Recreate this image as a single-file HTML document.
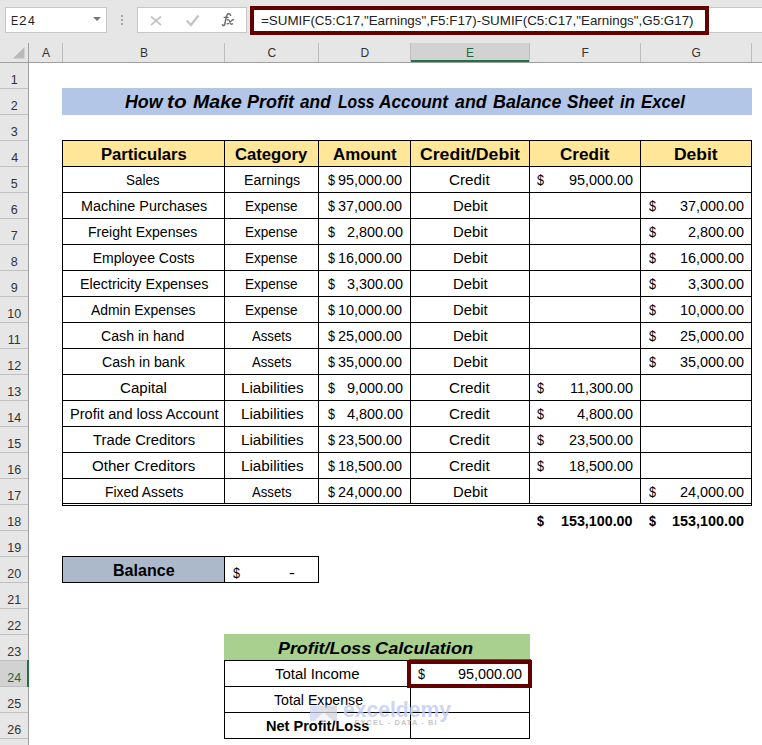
<!DOCTYPE html>
<html><head><meta charset="utf-8">
<style>
html,body{margin:0;padding:0;}
body{width:762px;height:745px;position:relative;overflow:hidden;background:#fff;font-family:"Liberation Sans",sans-serif;}
.a{position:absolute;box-sizing:border-box;}
.t{position:absolute;white-space:pre;transform-origin:0 0;line-height:normal;font-family:"Liberation Sans",sans-serif;}
.hl{position:absolute;height:1px;background:#000;}
.vl{position:absolute;width:1px;background:#000;}
.gh{position:absolute;height:1px;background:#D4D4D4;}
.gv{position:absolute;width:1px;background:#BDBDBD;}
</style></head><body>
<!-- top toolbar band -->
<div class="a" style="left:0;top:0;width:762px;height:62px;background:#E6E6E6"></div>
<div class="a" style="left:0;top:62px;width:28px;height:683px;background:#E6E6E6"></div>
<!-- name box -->
<div class="a" style="left:5px;top:7px;width:102px;height:26px;background:#fff;border:1px solid #C6C6C6"></div>
<div class="a" style="left:92.5px;top:17px;width:0;height:0;border-left:4px solid transparent;border-right:4px solid transparent;border-top:4px solid #777"></div>
<!-- dots -->
<div class="a" style="left:121px;top:15px;width:2px;height:2px;background:#a6a6a6"></div>
<div class="a" style="left:121px;top:19px;width:2px;height:2px;background:#a6a6a6"></div>
<div class="a" style="left:121px;top:23px;width:2px;height:2px;background:#a6a6a6"></div>
<!-- fx box -->
<div class="a" style="left:137px;top:7px;width:110px;height:26px;background:#fff;border:1px solid #C6C6C6"></div>
<svg class="a" style="left:0;top:0" width="762" height="62">
 <path d="M151 16.5 L161 25 M161 16.5 L151 25" stroke="#C4C4C4" stroke-width="1.7" fill="none"/>
 <path d="M186.5 20.5 L191 25 L198.5 15.5" stroke="#C4C4C4" stroke-width="2.2" fill="none"/>
</svg>
<svg class="a" style="left:215px;top:8px" width="25" height="24">
 <path d="M15.6 7.3 C15.2 5.6 13.2 5.0 12.2 6.6 C11.6 7.6 11.3 9 11 10.5 L9.8 16.2 C9.4 17.8 8.4 17.9 7.4 16.9" stroke="#6A6A6A" stroke-width="1.5" fill="none" stroke-linecap="round"/>
 <path d="M8.6 9.4 L13.6 9.4" stroke="#6A6A6A" stroke-width="1.3" fill="none"/>
 <path d="M12.6 11.9 C13.6 11.4 14.2 12 14.6 13.2 L15.6 15.6 C16 16.4 16.8 16.4 17.6 15.8 M18.4 11.8 C17.8 11.6 17.2 12 16.4 12.9 L13.8 15.4 C13.4 15.9 12.8 16 12.2 15.6" stroke="#6A6A6A" stroke-width="1.3" fill="none" stroke-linecap="round"/>
</svg>
<!-- formula bar -->
<div class="a" style="left:250px;top:7px;width:512px;height:26px;background:#fff;border-top:1px solid #C6C6C6;border-bottom:1px solid #C6C6C6"></div>
<div class="a" style="left:250px;top:6px;width:459px;height:29px;border:4px solid #640000"></div>
<!-- column header -->
<div class="a" style="left:410px;top:43px;width:119px;height:19px;background:#D2D2D2"></div>
<div class="a" style="left:410px;top:60px;width:120px;height:2px;background:#217346"></div>
<div class="a" style="left:0;top:62px;width:762px;height:1px;background:#A0A0A0"></div>
<div class="a" style="left:28px;top:43px;width:1px;height:702px;background:#A0A0A0"></div>
<svg class="a" style="left:0;top:0" width="30" height="62"><path d="M13 58.5 L24.5 47 L24.5 58.5 Z" fill="#B9B9B9"/></svg>
<div class="a" style="left:62px;top:43px;width:1px;height:19px;background:#BDBDBD"></div><div class="a" style="left:224px;top:43px;width:1px;height:19px;background:#BDBDBD"></div><div class="a" style="left:318px;top:43px;width:1px;height:19px;background:#BDBDBD"></div><div class="a" style="left:410px;top:43px;width:1px;height:19px;background:#BDBDBD"></div><div class="a" style="left:529px;top:43px;width:1px;height:19px;background:#BDBDBD"></div><div class="a" style="left:640px;top:43px;width:1px;height:19px;background:#BDBDBD"></div><div class="a" style="left:751px;top:43px;width:1px;height:19px;background:#BDBDBD"></div>
<div class="a" style="left:0;top:88px;width:28px;height:1px;background:#C0C0C0"></div><div class="a" style="left:0;top:114px;width:28px;height:1px;background:#C0C0C0"></div><div class="a" style="left:0;top:140px;width:28px;height:1px;background:#C0C0C0"></div><div class="a" style="left:0;top:166px;width:28px;height:1px;background:#C0C0C0"></div><div class="a" style="left:0;top:192px;width:28px;height:1px;background:#C0C0C0"></div><div class="a" style="left:0;top:218px;width:28px;height:1px;background:#C0C0C0"></div><div class="a" style="left:0;top:244px;width:28px;height:1px;background:#C0C0C0"></div><div class="a" style="left:0;top:270px;width:28px;height:1px;background:#C0C0C0"></div><div class="a" style="left:0;top:296px;width:28px;height:1px;background:#C0C0C0"></div><div class="a" style="left:0;top:322px;width:28px;height:1px;background:#C0C0C0"></div><div class="a" style="left:0;top:348px;width:28px;height:1px;background:#C0C0C0"></div><div class="a" style="left:0;top:374px;width:28px;height:1px;background:#C0C0C0"></div><div class="a" style="left:0;top:400px;width:28px;height:1px;background:#C0C0C0"></div><div class="a" style="left:0;top:426px;width:28px;height:1px;background:#C0C0C0"></div><div class="a" style="left:0;top:452px;width:28px;height:1px;background:#C0C0C0"></div><div class="a" style="left:0;top:478px;width:28px;height:1px;background:#C0C0C0"></div><div class="a" style="left:0;top:504px;width:28px;height:1px;background:#C0C0C0"></div><div class="a" style="left:0;top:530px;width:28px;height:1px;background:#C0C0C0"></div><div class="a" style="left:0;top:556px;width:28px;height:1px;background:#C0C0C0"></div><div class="a" style="left:0;top:582px;width:28px;height:1px;background:#C0C0C0"></div><div class="a" style="left:0;top:608px;width:28px;height:1px;background:#C0C0C0"></div><div class="a" style="left:0;top:634px;width:28px;height:1px;background:#C0C0C0"></div><div class="a" style="left:0;top:660px;width:28px;height:1px;background:#C0C0C0"></div><div class="a" style="left:0;top:686px;width:28px;height:1px;background:#C0C0C0"></div><div class="a" style="left:0;top:712px;width:28px;height:1px;background:#C0C0C0"></div><div class="a" style="left:0;top:738px;width:28px;height:1px;background:#C0C0C0"></div>
<!-- row 24 selected -->
<div class="a" style="left:0;top:661px;width:28px;height:25px;background:#D2D2D2"></div>
<div class="a" style="left:27px;top:660px;width:2px;height:27px;background:#217346"></div>

<!-- title fill -->
<div class="a" style="left:62px;top:88px;width:690px;height:27px;background:#B4C6E7"></div>
<!-- header fill -->
<div class="a" style="left:62px;top:140px;width:690px;height:27px;background:#FFE699"></div>
<div class="hl" style="left:62px;top:140px;width:690px"></div>
<div class="hl" style="left:62px;top:166px;width:690px"></div>
<div class="hl" style="left:62px;top:192px;width:690px"></div>
<div class="hl" style="left:62px;top:218px;width:690px"></div>
<div class="hl" style="left:62px;top:244px;width:690px"></div>
<div class="hl" style="left:62px;top:270px;width:690px"></div>
<div class="hl" style="left:62px;top:296px;width:690px"></div>
<div class="hl" style="left:62px;top:322px;width:690px"></div>
<div class="hl" style="left:62px;top:348px;width:690px"></div>
<div class="hl" style="left:62px;top:374px;width:690px"></div>
<div class="hl" style="left:62px;top:400px;width:690px"></div>
<div class="hl" style="left:62px;top:426px;width:690px"></div>
<div class="hl" style="left:62px;top:452px;width:690px"></div>
<div class="hl" style="left:62px;top:478px;width:690px"></div>
<div class="hl" style="left:62px;top:503px;width:690px"></div>
<div class="hl" style="left:62px;top:505px;width:690px"></div>
<div class="vl" style="left:62px;top:140px;height:366px"></div>
<div class="vl" style="left:224px;top:140px;height:364px"></div>
<div class="vl" style="left:318px;top:140px;height:364px"></div>
<div class="vl" style="left:410px;top:140px;height:364px"></div>
<div class="vl" style="left:529px;top:140px;height:364px"></div>
<div class="vl" style="left:640px;top:140px;height:364px"></div>
<div class="vl" style="left:751px;top:140px;height:366px"></div>
<!-- balance -->
<div class="a" style="left:62px;top:556px;width:163px;height:27px;background:#ACB9CA"></div>
<div class="hl" style="left:62px;top:556px;width:257px"></div>
<div class="hl" style="left:62px;top:582px;width:257px"></div>
<div class="vl" style="left:62px;top:556px;height:27px"></div>
<div class="vl" style="left:224px;top:556px;height:27px"></div>
<div class="vl" style="left:318px;top:556px;height:27px"></div>
<!-- profit/loss -->
<div class="a" style="left:224px;top:634px;width:306px;height:27px;background:#A9D08E"></div>
<div class="hl" style="left:224px;top:660px;width:306px"></div>
<div class="hl" style="left:224px;top:686px;width:306px"></div>
<div class="hl" style="left:224px;top:712px;width:306px"></div>
<div class="hl" style="left:224px;top:738px;width:306px"></div>
<div class="vl" style="left:224px;top:660px;height:79px"></div>
<div class="vl" style="left:410px;top:660px;height:79px"></div>
<div class="vl" style="left:529px;top:660px;height:79px"></div>

<!-- red highlight E24 -->
<div class="a" style="left:409px;top:659px;width:122px;height:1px;background:#217346"></div>
<div class="a" style="left:407px;top:660px;width:125px;height:28px;border:4px solid #640000"></div>
<span class=t style='left:11.47px;top:13.20px;font-size:13px;font-weight:normal;font-style:normal;color:#222;transform:scaleX(0.8286);'>E</span>
<span class=t style='left:19.15px;top:13.20px;font-size:13px;font-weight:normal;font-style:normal;color:#222;transform:scaleX(1.0500);'>2</span>
<span class=t style='left:28.00px;top:13.20px;font-size:13px;font-weight:normal;font-style:normal;color:#222;transform:scaleX(0.9429);'>4</span>
<span class=t style='left:261.47px;top:13.20px;font-size:13px;font-weight:normal;font-style:normal;color:#222;transform:scaleX(1.0286);'>=SUMIF(C5:C17,"Earnings",F5:F17)-SUMIF(C5:C17,"Earnings",G5:G17)</span>
<span class=t style='left:42.00px;top:46.00px;font-size:12px;font-weight:normal;font-style:normal;color:#333;'>A</span>
<span class=t style='left:140.00px;top:46.00px;font-size:12px;font-weight:normal;font-style:normal;color:#333;'>B</span>
<span class=t style='left:267.50px;top:46.00px;font-size:12px;font-weight:normal;font-style:normal;color:#333;'>C</span>
<span class=t style='left:360.50px;top:46.00px;font-size:12px;font-weight:normal;font-style:normal;color:#333;'>D</span>
<span class=t style='left:466.00px;top:46.00px;font-size:12px;font-weight:normal;font-style:normal;color:#1E6B41;'>E</span>
<span class=t style='left:581.50px;top:46.00px;font-size:12px;font-weight:normal;font-style:normal;color:#333;'>F</span>
<span class=t style='left:691.50px;top:46.00px;font-size:12px;font-weight:normal;font-style:normal;color:#333;'>G</span>
<span class=t style='left:10.80px;top:73.00px;font-size:12.5px;font-weight:normal;font-style:normal;color:#333;'>1</span>
<span class=t style='left:10.80px;top:99.00px;font-size:12.5px;font-weight:normal;font-style:normal;color:#333;'>2</span>
<span class=t style='left:10.80px;top:125.00px;font-size:12.5px;font-weight:normal;font-style:normal;color:#333;'>3</span>
<span class=t style='left:11.30px;top:151.00px;font-size:12.5px;font-weight:normal;font-style:normal;color:#333;'>4</span>
<span class=t style='left:10.80px;top:177.00px;font-size:12.5px;font-weight:normal;font-style:normal;color:#333;'>5</span>
<span class=t style='left:10.80px;top:203.00px;font-size:12.5px;font-weight:normal;font-style:normal;color:#333;'>6</span>
<span class=t style='left:10.80px;top:229.00px;font-size:12.5px;font-weight:normal;font-style:normal;color:#333;'>7</span>
<span class=t style='left:10.80px;top:255.00px;font-size:12.5px;font-weight:normal;font-style:normal;color:#333;'>8</span>
<span class=t style='left:10.80px;top:281.00px;font-size:12.5px;font-weight:normal;font-style:normal;color:#333;'>9</span>
<span class=t style='left:7.30px;top:307.00px;font-size:12.5px;font-weight:normal;font-style:normal;color:#333;'>10</span>
<span class=t style='left:7.80px;top:333.00px;font-size:12.5px;font-weight:normal;font-style:normal;color:#333;'>11</span>
<span class=t style='left:7.30px;top:359.00px;font-size:12.5px;font-weight:normal;font-style:normal;color:#333;'>12</span>
<span class=t style='left:7.30px;top:385.00px;font-size:12.5px;font-weight:normal;font-style:normal;color:#333;'>13</span>
<span class=t style='left:7.30px;top:411.00px;font-size:12.5px;font-weight:normal;font-style:normal;color:#333;'>14</span>
<span class=t style='left:7.30px;top:437.00px;font-size:12.5px;font-weight:normal;font-style:normal;color:#333;'>15</span>
<span class=t style='left:7.30px;top:463.00px;font-size:12.5px;font-weight:normal;font-style:normal;color:#333;'>16</span>
<span class=t style='left:7.30px;top:489.00px;font-size:12.5px;font-weight:normal;font-style:normal;color:#333;'>17</span>
<span class=t style='left:7.30px;top:515.00px;font-size:12.5px;font-weight:normal;font-style:normal;color:#333;'>18</span>
<span class=t style='left:7.30px;top:541.00px;font-size:12.5px;font-weight:normal;font-style:normal;color:#333;'>19</span>
<span class=t style='left:7.30px;top:567.00px;font-size:12.5px;font-weight:normal;font-style:normal;color:#333;'>20</span>
<span class=t style='left:7.30px;top:593.00px;font-size:12.5px;font-weight:normal;font-style:normal;color:#333;'>21</span>
<span class=t style='left:7.30px;top:619.00px;font-size:12.5px;font-weight:normal;font-style:normal;color:#333;'>22</span>
<span class=t style='left:7.30px;top:645.00px;font-size:12.5px;font-weight:normal;font-style:normal;color:#333;'>23</span>
<span class=t style='left:7.30px;top:671.00px;font-size:12.5px;font-weight:normal;font-style:normal;color:#1E6B41;'>24</span>
<span class=t style='left:7.30px;top:697.00px;font-size:12.5px;font-weight:normal;font-style:normal;color:#333;'>25</span>
<span class=t style='left:7.30px;top:723.00px;font-size:12.5px;font-weight:normal;font-style:normal;color:#333;'>26</span>
<span class=t style='left:125.30px;top:91.60px;font-size:17.6px;font-weight:bold;font-style:italic;color:#000;transform:scaleX(1.0132);'>How</span>
<span class=t style='left:166.82px;top:91.60px;font-size:17.6px;font-weight:bold;font-style:italic;color:#000;transform:scaleX(1.1800);'>to</span>
<span class=t style='left:192.90px;top:91.60px;font-size:17.6px;font-weight:bold;font-style:italic;color:#000;transform:scaleX(1.1114);'>Make</span>
<span class=t style='left:247.10px;top:91.60px;font-size:17.6px;font-weight:bold;font-style:italic;color:#000;transform:scaleX(1.0234);'>Profit</span>
<span class=t style='left:300.00px;top:91.60px;font-size:17.6px;font-weight:bold;font-style:italic;color:#000;transform:scaleX(0.9812);'>and</span>
<span class=t style='left:337.60px;top:91.60px;font-size:17.6px;font-weight:bold;font-style:italic;color:#000;transform:scaleX(0.8900);'>Loss</span>
<span class=t style='left:378.90px;top:91.60px;font-size:17.6px;font-weight:bold;font-style:italic;color:#000;transform:scaleX(0.9803);'>Account</span>
<span class=t style='left:455.20px;top:91.60px;font-size:17.6px;font-weight:bold;font-style:italic;color:#000;transform:scaleX(1.0094);'>and</span>
<span class=t style='left:493.20px;top:91.60px;font-size:17.6px;font-weight:bold;font-style:italic;color:#000;transform:scaleX(1.0149);'>Balance</span>
<span class=t style='left:566.90px;top:91.60px;font-size:17.6px;font-weight:bold;font-style:italic;color:#000;transform:scaleX(0.9714);'>Sheet</span>
<span class=t style='left:620.20px;top:91.60px;font-size:17.6px;font-weight:bold;font-style:italic;color:#000;transform:scaleX(0.9467);'>in</span>
<span class=t style='left:641.10px;top:91.60px;font-size:17.6px;font-weight:bold;font-style:italic;color:#000;transform:scaleX(0.9522);'>Excel</span>
<span class=t style='left:100.56px;top:145.50px;font-size:16px;font-weight:bold;font-style:normal;color:#000;transform:scaleX(1.0358);'>Particulars</span>
<span class=t style='left:235.16px;top:145.50px;font-size:16px;font-weight:bold;font-style:normal;color:#000;transform:scaleX(1.0412);'>Category</span>
<span class=t style='left:332.85px;top:145.50px;font-size:16px;font-weight:bold;font-style:normal;color:#000;transform:scaleX(1.0542);'>Amount</span>
<span class=t style='left:419.60px;top:145.50px;font-size:16px;font-weight:bold;font-style:normal;color:#000;transform:scaleX(1.1022);'>Credit/Debit</span>
<span class=t style='left:560.13px;top:145.50px;font-size:16px;font-weight:bold;font-style:normal;color:#000;transform:scaleX(1.0689);'>Credit</span>
<span class=t style='left:673.71px;top:145.50px;font-size:16px;font-weight:bold;font-style:normal;color:#000;transform:scaleX(1.0923);'>Debit</span>
<span class=t style='left:126.24px;top:171.60px;font-size:14px;font-weight:normal;font-style:normal;color:#000;transform:scaleX(0.9588);'>Sales</span>
<span class=t style='left:243.78px;top:171.60px;font-size:14px;font-weight:normal;font-style:normal;color:#000;transform:scaleX(1.0167);'>Earnings</span>
<span class=t style='left:327.80px;top:171.60px;font-size:14px;font-weight:normal;font-style:normal;color:#000;transform:scaleX(0.9000);'>$</span>
<span class=t style='left:338.37px;top:171.60px;font-size:14px;font-weight:normal;font-style:normal;color:#000;transform:scaleX(1.0295);'>95,000.00</span>
<span class=t style='left:449.31px;top:171.60px;font-size:14px;font-weight:normal;font-style:normal;color:#000;transform:scaleX(1.0889);'>Credit</span>
<span class=t style='left:537.30px;top:171.60px;font-size:14px;font-weight:normal;font-style:normal;color:#000;transform:scaleX(0.9000);'>$</span>
<span class=t style='left:568.57px;top:171.60px;font-size:14px;font-weight:normal;font-style:normal;color:#000;transform:scaleX(1.0295);'>95,000.00</span>
<span class=t style='left:80.67px;top:197.60px;font-size:14px;font-weight:normal;font-style:normal;color:#000;transform:scaleX(1.0270);'>Machine Purchases</span>
<span class=t style='left:245.03px;top:197.60px;font-size:14px;font-weight:normal;font-style:normal;color:#000;transform:scaleX(0.9660);'>Expense</span>
<span class=t style='left:327.80px;top:197.60px;font-size:14px;font-weight:normal;font-style:normal;color:#000;transform:scaleX(0.9000);'>$</span>
<span class=t style='left:338.37px;top:197.60px;font-size:14px;font-weight:normal;font-style:normal;color:#000;transform:scaleX(1.0295);'>37,000.00</span>
<span class=t style='left:452.54px;top:197.60px;font-size:14px;font-weight:normal;font-style:normal;color:#000;transform:scaleX(1.0594);'>Debit</span>
<span class=t style='left:648.50px;top:197.60px;font-size:14px;font-weight:normal;font-style:normal;color:#000;transform:scaleX(0.9000);'>$</span>
<span class=t style='left:679.87px;top:197.60px;font-size:14px;font-weight:normal;font-style:normal;color:#000;transform:scaleX(1.0295);'>37,000.00</span>
<span class=t style='left:88.40px;top:223.60px;font-size:14px;font-weight:normal;font-style:normal;color:#000;transform:scaleX(1.0037);'>Freight Expenses</span>
<span class=t style='left:245.03px;top:223.60px;font-size:14px;font-weight:normal;font-style:normal;color:#000;transform:scaleX(0.9660);'>Expense</span>
<span class=t style='left:327.80px;top:223.60px;font-size:14px;font-weight:normal;font-style:normal;color:#000;transform:scaleX(0.9000);'>$</span>
<span class=t style='left:346.61px;top:223.60px;font-size:14px;font-weight:normal;font-style:normal;color:#000;transform:scaleX(1.0295);'>2,800.00</span>
<span class=t style='left:452.54px;top:223.60px;font-size:14px;font-weight:normal;font-style:normal;color:#000;transform:scaleX(1.0594);'>Debit</span>
<span class=t style='left:648.50px;top:223.60px;font-size:14px;font-weight:normal;font-style:normal;color:#000;transform:scaleX(0.9000);'>$</span>
<span class=t style='left:688.11px;top:223.60px;font-size:14px;font-weight:normal;font-style:normal;color:#000;transform:scaleX(1.0295);'>2,800.00</span>
<span class=t style='left:92.70px;top:249.60px;font-size:14px;font-weight:normal;font-style:normal;color:#000;'>Employee Costs</span>
<span class=t style='left:245.03px;top:249.60px;font-size:14px;font-weight:normal;font-style:normal;color:#000;transform:scaleX(0.9660);'>Expense</span>
<span class=t style='left:327.80px;top:249.60px;font-size:14px;font-weight:normal;font-style:normal;color:#000;transform:scaleX(0.9000);'>$</span>
<span class=t style='left:338.37px;top:249.60px;font-size:14px;font-weight:normal;font-style:normal;color:#000;transform:scaleX(1.0295);'>16,000.00</span>
<span class=t style='left:452.54px;top:249.60px;font-size:14px;font-weight:normal;font-style:normal;color:#000;transform:scaleX(1.0594);'>Debit</span>
<span class=t style='left:648.50px;top:249.60px;font-size:14px;font-weight:normal;font-style:normal;color:#000;transform:scaleX(0.9000);'>$</span>
<span class=t style='left:679.87px;top:249.60px;font-size:14px;font-weight:normal;font-style:normal;color:#000;transform:scaleX(1.0295);'>16,000.00</span>
<span class=t style='left:79.77px;top:275.60px;font-size:14px;font-weight:normal;font-style:normal;color:#000;transform:scaleX(1.0250);'>Electricity Expenses</span>
<span class=t style='left:245.03px;top:275.60px;font-size:14px;font-weight:normal;font-style:normal;color:#000;transform:scaleX(0.9660);'>Expense</span>
<span class=t style='left:327.80px;top:275.60px;font-size:14px;font-weight:normal;font-style:normal;color:#000;transform:scaleX(0.9000);'>$</span>
<span class=t style='left:346.61px;top:275.60px;font-size:14px;font-weight:normal;font-style:normal;color:#000;transform:scaleX(1.0295);'>3,300.00</span>
<span class=t style='left:452.54px;top:275.60px;font-size:14px;font-weight:normal;font-style:normal;color:#000;transform:scaleX(1.0594);'>Debit</span>
<span class=t style='left:648.50px;top:275.60px;font-size:14px;font-weight:normal;font-style:normal;color:#000;transform:scaleX(0.9000);'>$</span>
<span class=t style='left:688.11px;top:275.60px;font-size:14px;font-weight:normal;font-style:normal;color:#000;transform:scaleX(1.0295);'>3,300.00</span>
<span class=t style='left:91.30px;top:301.60px;font-size:14px;font-weight:normal;font-style:normal;color:#000;transform:scaleX(0.9943);'>Admin Expenses</span>
<span class=t style='left:245.03px;top:301.60px;font-size:14px;font-weight:normal;font-style:normal;color:#000;transform:scaleX(0.9660);'>Expense</span>
<span class=t style='left:327.80px;top:301.60px;font-size:14px;font-weight:normal;font-style:normal;color:#000;transform:scaleX(0.9000);'>$</span>
<span class=t style='left:338.37px;top:301.60px;font-size:14px;font-weight:normal;font-style:normal;color:#000;transform:scaleX(1.0295);'>10,000.00</span>
<span class=t style='left:452.54px;top:301.60px;font-size:14px;font-weight:normal;font-style:normal;color:#000;transform:scaleX(1.0594);'>Debit</span>
<span class=t style='left:648.50px;top:301.60px;font-size:14px;font-weight:normal;font-style:normal;color:#000;transform:scaleX(0.9000);'>$</span>
<span class=t style='left:679.87px;top:301.60px;font-size:14px;font-weight:normal;font-style:normal;color:#000;transform:scaleX(1.0295);'>10,000.00</span>
<span class=t style='left:101.29px;top:327.60px;font-size:14px;font-weight:normal;font-style:normal;color:#000;transform:scaleX(1.0111);'>Cash in hand</span>
<span class=t style='left:252.10px;top:327.60px;font-size:14px;font-weight:normal;font-style:normal;color:#000;transform:scaleX(0.9405);'>Assets</span>
<span class=t style='left:327.80px;top:327.60px;font-size:14px;font-weight:normal;font-style:normal;color:#000;transform:scaleX(0.9000);'>$</span>
<span class=t style='left:338.37px;top:327.60px;font-size:14px;font-weight:normal;font-style:normal;color:#000;transform:scaleX(1.0295);'>25,000.00</span>
<span class=t style='left:452.54px;top:327.60px;font-size:14px;font-weight:normal;font-style:normal;color:#000;transform:scaleX(1.0594);'>Debit</span>
<span class=t style='left:648.50px;top:327.60px;font-size:14px;font-weight:normal;font-style:normal;color:#000;transform:scaleX(0.9000);'>$</span>
<span class=t style='left:679.87px;top:327.60px;font-size:14px;font-weight:normal;font-style:normal;color:#000;transform:scaleX(1.0295);'>25,000.00</span>
<span class=t style='left:101.99px;top:353.60px;font-size:14px;font-weight:normal;font-style:normal;color:#000;transform:scaleX(1.0123);'>Cash in bank</span>
<span class=t style='left:252.10px;top:353.60px;font-size:14px;font-weight:normal;font-style:normal;color:#000;transform:scaleX(0.9405);'>Assets</span>
<span class=t style='left:327.80px;top:353.60px;font-size:14px;font-weight:normal;font-style:normal;color:#000;transform:scaleX(0.9000);'>$</span>
<span class=t style='left:338.37px;top:353.60px;font-size:14px;font-weight:normal;font-style:normal;color:#000;transform:scaleX(1.0295);'>35,000.00</span>
<span class=t style='left:452.54px;top:353.60px;font-size:14px;font-weight:normal;font-style:normal;color:#000;transform:scaleX(1.0594);'>Debit</span>
<span class=t style='left:648.50px;top:353.60px;font-size:14px;font-weight:normal;font-style:normal;color:#000;transform:scaleX(0.9000);'>$</span>
<span class=t style='left:679.87px;top:353.60px;font-size:14px;font-weight:normal;font-style:normal;color:#000;transform:scaleX(1.0295);'>35,000.00</span>
<span class=t style='left:120.32px;top:379.60px;font-size:14px;font-weight:normal;font-style:normal;color:#000;transform:scaleX(1.0762);'>Capital</span>
<span class=t style='left:240.51px;top:379.60px;font-size:14px;font-weight:normal;font-style:normal;color:#000;transform:scaleX(1.0893);'>Liabilities</span>
<span class=t style='left:327.80px;top:379.60px;font-size:14px;font-weight:normal;font-style:normal;color:#000;transform:scaleX(0.9000);'>$</span>
<span class=t style='left:346.61px;top:379.60px;font-size:14px;font-weight:normal;font-style:normal;color:#000;transform:scaleX(1.0295);'>9,000.00</span>
<span class=t style='left:449.31px;top:379.60px;font-size:14px;font-weight:normal;font-style:normal;color:#000;transform:scaleX(1.0889);'>Credit</span>
<span class=t style='left:537.30px;top:379.60px;font-size:14px;font-weight:normal;font-style:normal;color:#000;transform:scaleX(0.9000);'>$</span>
<span class=t style='left:569.60px;top:379.60px;font-size:14px;font-weight:normal;font-style:normal;color:#000;transform:scaleX(1.0295);'>11,300.00</span>
<span class=t style='left:69.56px;top:405.60px;font-size:14px;font-weight:normal;font-style:normal;color:#000;transform:scaleX(1.0433);'>Profit and loss Account</span>
<span class=t style='left:240.51px;top:405.60px;font-size:14px;font-weight:normal;font-style:normal;color:#000;transform:scaleX(1.0893);'>Liabilities</span>
<span class=t style='left:327.80px;top:405.60px;font-size:14px;font-weight:normal;font-style:normal;color:#000;transform:scaleX(0.9000);'>$</span>
<span class=t style='left:346.61px;top:405.60px;font-size:14px;font-weight:normal;font-style:normal;color:#000;transform:scaleX(1.0295);'>4,800.00</span>
<span class=t style='left:449.31px;top:405.60px;font-size:14px;font-weight:normal;font-style:normal;color:#000;transform:scaleX(1.0889);'>Credit</span>
<span class=t style='left:537.30px;top:405.60px;font-size:14px;font-weight:normal;font-style:normal;color:#000;transform:scaleX(0.9000);'>$</span>
<span class=t style='left:576.81px;top:405.60px;font-size:14px;font-weight:normal;font-style:normal;color:#000;transform:scaleX(1.0295);'>4,800.00</span>
<span class=t style='left:93.30px;top:431.60px;font-size:14px;font-weight:normal;font-style:normal;color:#000;transform:scaleX(1.0562);'>Trade Creditors</span>
<span class=t style='left:240.51px;top:431.60px;font-size:14px;font-weight:normal;font-style:normal;color:#000;transform:scaleX(1.0893);'>Liabilities</span>
<span class=t style='left:327.80px;top:431.60px;font-size:14px;font-weight:normal;font-style:normal;color:#000;transform:scaleX(0.9000);'>$</span>
<span class=t style='left:338.37px;top:431.60px;font-size:14px;font-weight:normal;font-style:normal;color:#000;transform:scaleX(1.0295);'>23,500.00</span>
<span class=t style='left:449.31px;top:431.60px;font-size:14px;font-weight:normal;font-style:normal;color:#000;transform:scaleX(1.0889);'>Credit</span>
<span class=t style='left:537.30px;top:431.60px;font-size:14px;font-weight:normal;font-style:normal;color:#000;transform:scaleX(0.9000);'>$</span>
<span class=t style='left:568.57px;top:431.60px;font-size:14px;font-weight:normal;font-style:normal;color:#000;transform:scaleX(1.0295);'>23,500.00</span>
<span class=t style='left:92.22px;top:457.60px;font-size:14px;font-weight:normal;font-style:normal;color:#000;transform:scaleX(1.0787);'>Other Creditors</span>
<span class=t style='left:240.51px;top:457.60px;font-size:14px;font-weight:normal;font-style:normal;color:#000;transform:scaleX(1.0893);'>Liabilities</span>
<span class=t style='left:327.80px;top:457.60px;font-size:14px;font-weight:normal;font-style:normal;color:#000;transform:scaleX(0.9000);'>$</span>
<span class=t style='left:338.37px;top:457.60px;font-size:14px;font-weight:normal;font-style:normal;color:#000;transform:scaleX(1.0295);'>18,500.00</span>
<span class=t style='left:449.31px;top:457.60px;font-size:14px;font-weight:normal;font-style:normal;color:#000;transform:scaleX(1.0889);'>Credit</span>
<span class=t style='left:537.30px;top:457.60px;font-size:14px;font-weight:normal;font-style:normal;color:#000;transform:scaleX(0.9000);'>$</span>
<span class=t style='left:568.57px;top:457.60px;font-size:14px;font-weight:normal;font-style:normal;color:#000;transform:scaleX(1.0295);'>18,500.00</span>
<span class=t style='left:104.51px;top:483.60px;font-size:14px;font-weight:normal;font-style:normal;color:#000;transform:scaleX(0.9872);'>Fixed Assets</span>
<span class=t style='left:252.10px;top:483.60px;font-size:14px;font-weight:normal;font-style:normal;color:#000;transform:scaleX(0.9405);'>Assets</span>
<span class=t style='left:327.80px;top:483.60px;font-size:14px;font-weight:normal;font-style:normal;color:#000;transform:scaleX(0.9000);'>$</span>
<span class=t style='left:338.37px;top:483.60px;font-size:14px;font-weight:normal;font-style:normal;color:#000;transform:scaleX(1.0295);'>24,000.00</span>
<span class=t style='left:452.54px;top:483.60px;font-size:14px;font-weight:normal;font-style:normal;color:#000;transform:scaleX(1.0594);'>Debit</span>
<span class=t style='left:648.50px;top:483.60px;font-size:14px;font-weight:normal;font-style:normal;color:#000;transform:scaleX(0.9000);'>$</span>
<span class=t style='left:679.87px;top:483.60px;font-size:14px;font-weight:normal;font-style:normal;color:#000;transform:scaleX(1.0295);'>24,000.00</span>
<span class=t style='left:537.20px;top:512.60px;font-size:14px;font-weight:bold;font-style:normal;color:#000;transform:scaleX(0.9000);'>$</span>
<span class=t style='left:560.78px;top:512.60px;font-size:14px;font-weight:bold;font-style:normal;color:#000;transform:scaleX(1.0203);'>153,100.00</span>
<span class=t style='left:648.50px;top:512.60px;font-size:14px;font-weight:bold;font-style:normal;color:#000;transform:scaleX(0.9000);'>$</span>
<span class=t style='left:671.67px;top:512.60px;font-size:14px;font-weight:bold;font-style:normal;color:#000;transform:scaleX(1.0290);'>153,100.00</span>
<span class=t style='left:112.50px;top:561.50px;font-size:16px;font-weight:bold;font-style:normal;color:#000;transform:scaleX(1.0033);'>Balance</span>
<span class=t style='left:232.60px;top:564.60px;font-size:14px;font-weight:normal;font-style:normal;color:#000;transform:scaleX(0.9000);'>$</span>
<span class=t style='left:288.83px;top:564.60px;font-size:14px;font-weight:normal;font-style:normal;color:#000;transform:scaleX(1.2667);'>-</span>
<span class=t style='left:278.30px;top:638.70px;font-size:17px;font-weight:bold;font-style:italic;color:#000;transform:scaleX(1.0489);'>Profit/Loss</span>
<span class=t style='left:375.03px;top:638.70px;font-size:17px;font-weight:bold;font-style:italic;color:#000;transform:scaleX(1.0711);'>Calculation</span>
<span class=t style='left:275.30px;top:666.00px;font-size:14px;font-weight:normal;font-style:normal;color:#000;transform:scaleX(1.0658);'>Total Income</span>
<span class=t style='left:273.50px;top:692.00px;font-size:14px;font-weight:normal;font-style:normal;color:#000;transform:scaleX(1.0125);'>Total Expense</span>
<span class=t style='left:265.66px;top:717.80px;font-size:14px;font-weight:bold;font-style:normal;color:#000;transform:scaleX(1.0388);'>Net Profit/Loss</span>
<span class=t style='left:418.00px;top:666.00px;font-size:14px;font-weight:normal;font-style:normal;color:#000;transform:scaleX(0.9000);'>$</span>
<span class=t style='left:457.57px;top:666.00px;font-size:14px;font-weight:normal;font-style:normal;color:#000;transform:scaleX(1.0295);'>95,000.00</span>
<!-- watermark -->
<svg class="a" style="left:300px;top:695px" width="170" height="40">
 <g opacity="0.75">
 <rect x="10" y="10.5" width="14" height="15.5" fill="#CAD4F4"/>
 <rect x="24" y="10.5" width="13" height="15.5" fill="#D2D4D8"/>
 <path d="M14 26 L24 17.5 L33 26 Z" fill="#F2F4FA"/>
 <path d="M18 14.5 L24 11 L27 14 L27 21 L24 17.5 L18 21 Z" fill="#D6D8DC"/>
 </g>
 <text x="43" y="22.3" font-family="Liberation Sans" font-weight="bold" font-size="22" fill="#BFCDF3" opacity="0.8" textLength="108" lengthAdjust="spacingAndGlyphs">exceldemy</text>
 <text x="54.5" y="29.8" font-family="Liberation Sans" font-weight="bold" font-size="7.4" fill="#BDBDBD" opacity="0.85" textLength="82" lengthAdjust="spacing">EXCEL - DATA - BI</text>
</svg>

</body></html>
